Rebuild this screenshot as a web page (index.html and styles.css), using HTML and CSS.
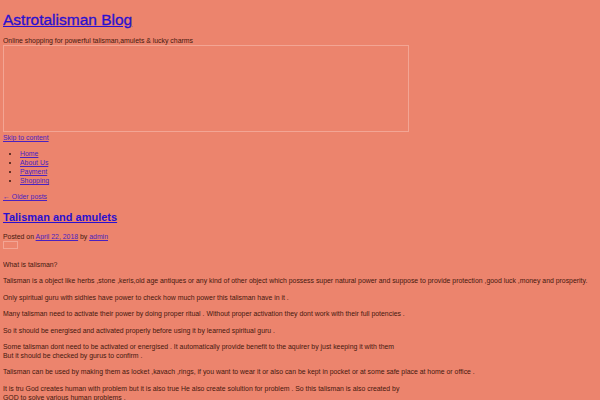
FILE: index.html
```html
<!DOCTYPE html>
<html>
<head>
<meta charset="utf-8">
<link rel="stylesheet" href="styles.css">
</head>
<body>
<header class="site-header">
  <h1 class="site-title"><a href="#">Astrotalisman Blog</a></h1>
  <p class="site-desc">Online shopping for powerful talisman,amulets &amp; lucky charms</p>
  <div class="header-image"></div>
  <a class="skip" href="#">Skip to content</a>
  <ul class="menu">
    <li><a href="#">Home</a></li>
    <li><a href="#">About Us</a></li>
    <li><a href="#">Payment</a></li>
    <li><a href="#">Shopping</a></li>
  </ul>
</header>
<div class="nav-prev"><a href="#">&larr; Older posts</a></div>
<article class="post">
  <h2 class="post-title"><a href="#">Talisman and amulets</a></h2>
  <div class="meta">Posted on <a href="#">April 22, 2018</a> by <a href="#">admin</a></div>
  <div class="thumb"></div>
  <div class="content">
    <p>What is talisman?</p>
    <p>Talisman is a object like herbs ,stone ,keris,old age antiques or any kind of other object which possess super natural power and suppose to provide protection ,good luck ,money and prosperity.</p>
    <p>Only spiritual guru with sidhies have power to check how much power this talisman have in it .</p>
    <p>Many talisman need to activate their power by doing proper ritual . Without proper activation they dont work with their full potencies .</p>
    <p>So it should be energised and activated properly before using it by learned spiritual guru .</p>
    <p>Some talisman dont need to be activated or energised . It automatically provide benefit to the aquirer by just keeping it with them<br>But it should be checked by gurus to confirm .</p>
    <p>Talisman can be used by making them as locket ,kavach ,rings, if you want to wear it or also can be kept in pocket or at some safe place at home or office .</p>
    <p>It is tru God creates human with problem but it is also true He also create solultion for problem . So this talisman is also created by<br>GOD to solve various human problems .</p>
  </div>
</article>
</body>
</html>
```
FILE: styles.css
```css
html {
  background: #ec846d;
}
body {
  margin: 4px 3px;
  font-family: "Liberation Sans", Arial, sans-serif;
  font-size: 6.9px;
  line-height: 9px;
  color: #45180e;
}
a {
  color: #4a22c0;
}
.site-title {
  font-size: 15.5px;
  line-height: 18px;
  font-weight: normal;
  margin: 7px 0 7px;
  -webkit-text-stroke: 0.3px #2a10d0;
}
.site-title a {
  color: #2a10d0;
}
.site-desc {
  margin: 0;
}
.header-image {
  width: 406px;
  height: 87px;
  border: 1px solid #f3a594;
  box-sizing: border-box;
  margin-bottom: 1px;
}
.skip {
  display: block;
}
.menu {
  margin: 7px 0;
  padding-left: 17px;
}
.menu li {
  color: #3a140c;
}
.nav-prev {
  margin: 7px 0;
}
.post-title {
  font-size: 11px;
  line-height: 14px;
  margin: 9px 0 8px;
}
.post-title a {
  color: #2a10d0;
}
.meta {
  margin: 0;
}
.thumb {
  width: 15px;
  height: 8px;
  border: 1px solid #f3a594;
  box-sizing: border-box;
}
.content p {
  margin: 7.4px 0;
}
.content p:first-child {
  margin-top: 11px;
}
```
